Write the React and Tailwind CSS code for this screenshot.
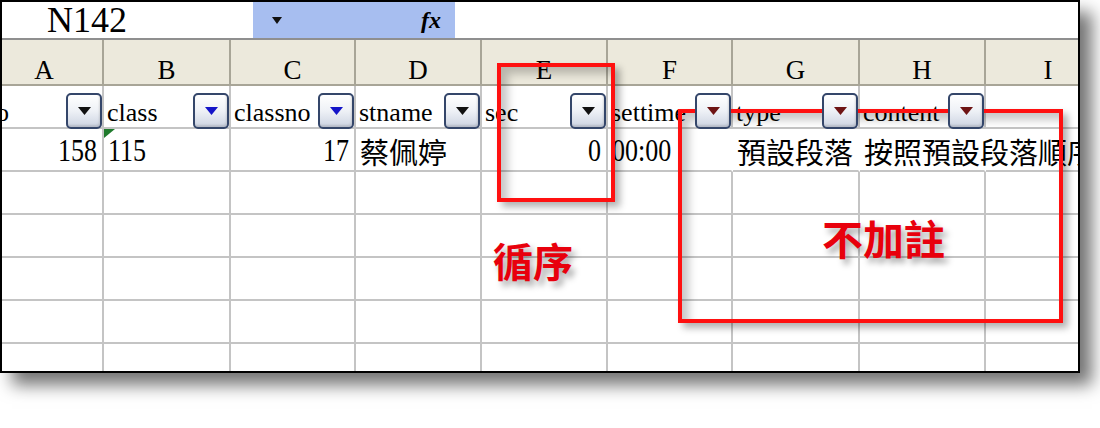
const GRID = 'grid grid-cols-[102px_127px_125px_126px_126px_125px_127px_126px_126px]';
const SERIF = "font-['Liberation_Serif','Noto_Sans_CJK_TC',serif]";

const LETTERS = ['A', 'B', 'C', 'D', 'E', 'F', 'G', 'H', 'I'];

const FILTERS = [
  { label: 'no', arrow: '#111', shift: true },
  { label: 'class', arrow: '#1414c8' },
  { label: 'classno', arrow: '#1414c8' },
  { label: 'stname', arrow: '#111' },
  { label: 'sec', arrow: '#111' },
  { label: 'settime', arrow: '#6e1414' },
  { label: 'type', arrow: '#6e1414' },
  { label: 'content', arrow: '#6e1414' },
  null,
];

const RECORD = [
  { v: '158', right: true },
  { v: '115', flag: true },
  { v: '17', right: true },
  { v: '蔡佩婷', cjk: true },
  { v: '0', right: true },
  { v: '00:00', open: true },
  { v: '預設段落', cjk: true, open: true },
  { v: '按照預設段落順序播放', cjk: true, open: true },
  { v: '' },
];

function FilterButton({ color }) {
  return (
    <span className="relative z-10 -mb-[2px] flex h-[36px] w-[36px] shrink-0 items-center justify-center rounded-[5px] border-2 border-[#34466a] bg-linear-to-b from-white via-[#eef1f6] to-[#cdd4e2] shadow-[inset_-1px_-2px_2px_rgba(0,0,0,0.12)]">
      <svg width="13" height="8" viewBox="0 0 13 8">
        <path d="M0 0h13L6.5 8z" fill={color} />
      </svg>
    </span>
  );
}

function FormulaBar() {
  return (
    <div className="flex h-[38px] border-b-2 border-[#8f8f8f]">
      <div className={`w-[251px] bg-white pl-[45px] text-[36px] leading-[36px] text-black ${SERIF}`}>N142</div>
      <div className="flex w-[202px] items-center bg-[#a7bef0]">
        <svg className="ml-[19px]" width="10" height="7" viewBox="0 0 10 7">
          <path d="M0 0h10L5 7z" fill="#111" />
        </svg>
        <span className={`ml-auto mr-[14px] text-[24px] font-bold italic leading-none ${SERIF}`}>fx</span>
      </div>
      <div className="flex-1 bg-white" />
    </div>
  );
}

function HeaderRow() {
  return (
    <div className={`${GRID} h-[46px] bg-[#ece9dc]`}>
      {LETTERS.map((l, i) => (
        <div
          key={l}
          className={`flex items-end justify-center border-r-2 border-b-2 border-[#a8a597] text-[27px] leading-none ${SERIF} ${i === 0 ? 'pr-[16px]' : ''}`}
        >
          {l}
        </div>
      ))}
    </div>
  );
}

function FilterRow() {
  return (
    <div className={`${GRID} h-[43px]`}>
      {FILTERS.map((f, i) => (
        <div key={i} className="flex items-end border-r-2 border-b-2 border-[#c4c4c4]">
          {f && (
            <>
              <span className={`pb-[1px] text-[26px] leading-none whitespace-nowrap ${SERIF} ${f.shift ? '-ml-[19px]' : 'pl-[3px]'}`}>
                {f.label}
              </span>
              <span className="flex-1" />
              <FilterButton color={f.arrow} />
            </>
          )}
        </div>
      ))}
    </div>
  );
}

function RecordRow() {
  return (
    <div className={`${GRID} h-[43px]`}>
      {RECORD.map((c, i) => (
        <div
          key={i}
          className={`relative flex items-end border-b-2 border-r-2 border-b-[#c4c4c4] ${c.open ? 'border-r-transparent' : 'border-r-[#c4c4c4]'} ${c.right ? 'justify-end pr-[5px]' : 'pl-[4px]'}`}
        >
          {c.flag && (
            <svg className="absolute left-0 top-0" width="11" height="9" viewBox="0 0 11 9">
              <path d="M0 0h11L0 9z" fill="#1f7a2c" />
            </svg>
          )}
          <span
            className={`whitespace-nowrap leading-none text-black ${SERIF} ${c.cjk ? 'pb-[1px] text-[29px]' : 'inline-block origin-bottom scale-y-125 pb-[2px] text-[26px]'}`}
          >
            {c.v}
          </span>
        </div>
      ))}
    </div>
  );
}

function BlankRow({ tall = true }) {
  return (
    <div className={`${GRID} ${tall ? 'h-[43px]' : 'h-[30px]'}`}>
      {LETTERS.map((l) => (
        <div key={l} className="border-r-2 border-b-2 border-[#c4c4c4]" />
      ))}
    </div>
  );
}

export default function App() {
  return (
    <div className="relative h-[428px] w-[1100px] overflow-hidden bg-white">
      {/* sheet window */}
      <div className="h-[373px] w-[1080px] overflow-hidden border-2 border-black bg-white shadow-[12px_12px_16px_rgba(0,0,0,0.55)]">
        <FormulaBar />
        <HeaderRow />
        <FilterRow />
        <RecordRow />
        <BlankRow />
        <BlankRow />
        <BlankRow />
        <BlankRow />
        <BlankRow tall={false} />
      </div>

      {/* callouts */}
      <div className="pointer-events-none absolute left-[497px] top-[63px] h-[139px] w-[118px] border-4 border-[#ff1010] shadow-[5px_5px_7px_rgba(0,0,0,0.3),inset_7px_7px_9px_rgba(0,0,0,0.22)]" />
      <div className="pointer-events-none absolute left-[678px] top-[109px] h-[214px] w-[385px] border-4 border-[#ff1010] shadow-[5px_5px_7px_rgba(0,0,0,0.3),inset_7px_7px_9px_rgba(0,0,0,0.22)]" />
      <span className="absolute left-[493px] top-[240px] font-['Noto_Sans_CJK_TC',sans-serif] text-[40px] font-bold leading-none text-[#e8000c] [text-shadow:4px_5px_6px_rgba(0,0,0,0.35)]">
        循序
      </span>
      <span className="absolute left-[822px] top-[217px] font-['Noto_Sans_CJK_TC',sans-serif] text-[41px] font-bold leading-none text-[#e8000c] [text-shadow:4px_5px_6px_rgba(0,0,0,0.35)]">
        不加註
      </span>
    </div>
  );
}
